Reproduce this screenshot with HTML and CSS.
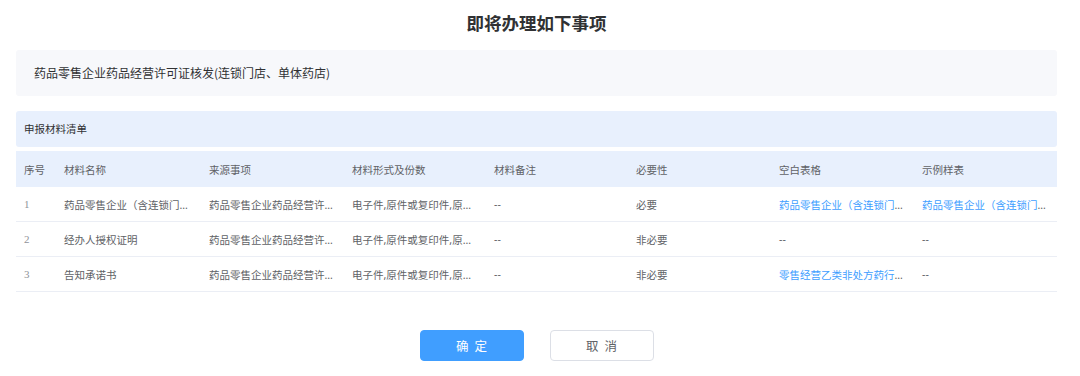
FILE: index.html
```html
<!DOCTYPE html>
<html lang="zh-CN">

<head>
    <meta charset="UTF-8">
    <meta name="viewport" content="width=device-width, initial-scale=1.0">
    <title>即将办理如下事项</title>
    <link rel="stylesheet" href="styles.css">
</head>

<body>
    <div class="dialog">
        <h2 class="dialog-title">即将办理如下事项</h2>
        <div class="matter-box">药品零售企业药品经营许可证核发(连锁门店、单体药店)</div>

        <div class="section-title">申报材料清单</div>
        <table class="material-table">
            <colgroup>
                <col style="width: 40px">
                <col style="width: 145px">
                <col style="width: 143px">
                <col style="width: 142px">
                <col style="width: 142px">
                <col style="width: 143px">
                <col style="width: 143px">
                <col style="width: 143px">
            </colgroup>
            <thead>
                <tr>
                    <th>序号</th>
                    <th>材料名称</th>
                    <th>来源事项</th>
                    <th>材料形式及份数</th>
                    <th>材料备注</th>
                    <th>必要性</th>
                    <th>空白表格</th>
                    <th>示例样表</th>
                </tr>
            </thead>
            <tbody>
                <tr>
                    <td class="num">1</td>
                    <td>药品零售企业（含连锁门店、单体药店）申请表</td>
                    <td>药品零售企业药品经营许可证核发(连锁门店、单体药店)</td>
                    <td>电子件,原件或复印件,原件1份,复印件1份</td>
                    <td>--</td>
                    <td>必要</td>
                    <td><a href="#">药品零售企业（含连锁门店、单体药店）申请表</a></td>
                    <td><a href="#">药品零售企业（含连锁门店、单体药店）申请表</a></td>
                </tr>
                <tr>
                    <td class="num">2</td>
                    <td>经办人授权证明</td>
                    <td>药品零售企业药品经营许可证核发(连锁门店、单体药店)</td>
                    <td>电子件,原件或复印件,原件1份,复印件1份</td>
                    <td>--</td>
                    <td>非必要</td>
                    <td>--</td>
                    <td>--</td>
                </tr>
                <tr>
                    <td class="num">3</td>
                    <td>告知承诺书</td>
                    <td>药品零售企业药品经营许可证核发(连锁门店、单体药店)</td>
                    <td>电子件,原件或复印件,原件1份,复印件1份</td>
                    <td>--</td>
                    <td>非必要</td>
                    <td><a href="#">零售经营乙类非处方药行政许可告知承诺书</a></td>
                    <td>--</td>
                </tr>
            </tbody>
        </table>

        <div class="dialog-footer">
            <button class="btn btn-primary">确定</button>
            <button class="btn">取消</button>
        </div>
    </div>
</body>

</html>
```

FILE: styles.css
```css
body {
    font-family: "Noto Sans CJK SC", "Noto Sans", sans-serif;
    margin: 0;
    background-color: #fff;
    color: #606266;
}

.dialog {
    padding: 0 23px 0 16px;
}

.dialog-title {
    margin: 0;
    height: 45px;
    line-height: 45px;
    text-align: center;
    font-size: 17.5px;
    font-weight: bold;
    color: #303133;
}

.matter-box {
    margin-top: 5px;
    height: 46px;
    line-height: 46px;
    padding-left: 18px;
    background-color: #f7f8fb;
    border-radius: 3px;
    font-size: 12px;
    color: #303133;
}

.section-title {
    margin-top: 15px;
    height: 36px;
    line-height: 36px;
    padding-left: 8px;
    background-color: #e8f0fd;
    border-radius: 3px;
    font-size: 10.5px;
    color: #303133;
}

.material-table {
    margin-top: 4px;
    width: 1041px;
    table-layout: fixed;
    border-collapse: collapse;
    font-family: "Noto Sans", "Noto Sans CJK SC", sans-serif;
    font-size: 10.5px;
}

.material-table th {
    height: 36px;
    padding: 0 4px 0 8px;
    background-color: #e8f0fd;
    text-align: left;
    font-weight: normal;
    color: #606266;
}

.material-table td {
    height: 34px;
    padding: 0 6px 0 8px;
    border-bottom: 1px solid #ebeef5;
    white-space: nowrap;
    overflow: hidden;
    text-overflow: ellipsis;
    color: #606266;
}

.material-table td.num {
    font-family: "Liberation Serif", serif;
    font-size: 11px;
    color: #909399;
}

.material-table a {
    color: #409eff;
    text-decoration: none;
}

.dialog-footer {
    margin-top: 38px;
    display: flex;
    justify-content: center;
    gap: 26px;
}

.btn {
    width: 104px;
    height: 31px;
    font-family: inherit;
    font-size: 12.5px;
    letter-spacing: 6px;
    text-indent: 6px;
    color: #606266;
    background-color: #fff;
    border: 1px solid #dcdfe6;
    border-radius: 4px;
    cursor: pointer;
}

.btn-primary {
    color: #fff;
    background-color: #409eff;
    border-color: #409eff;
}
```
